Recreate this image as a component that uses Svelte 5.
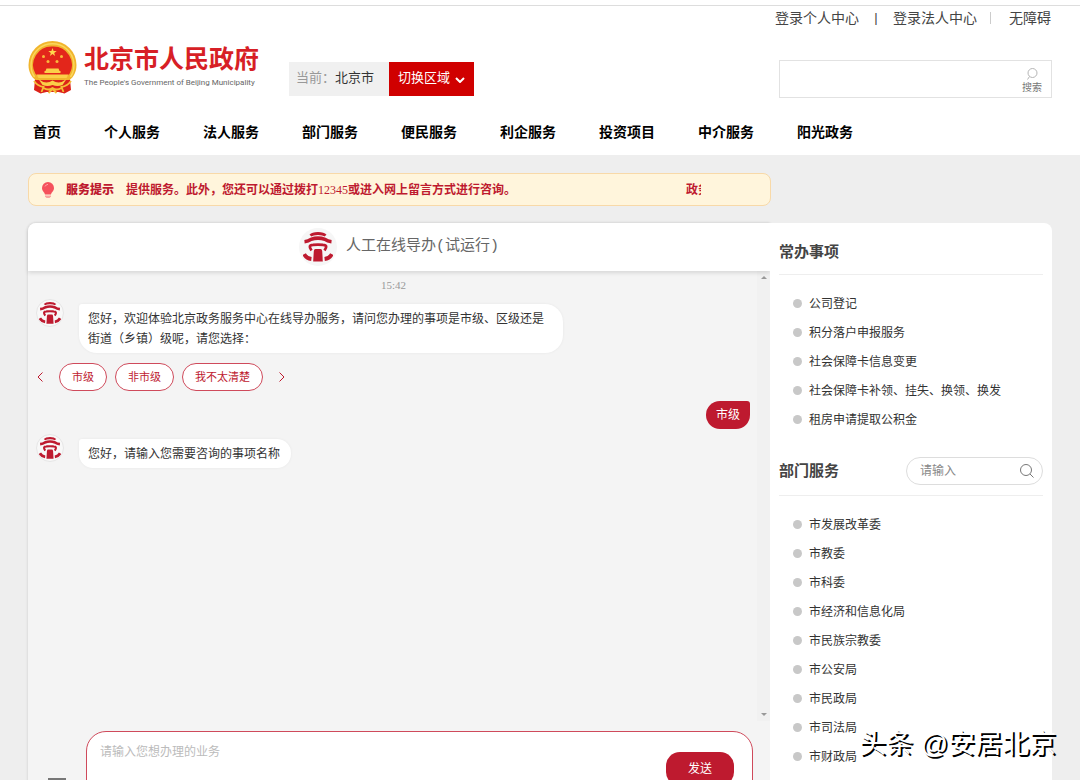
<script>
  const nav = ['首页', '个人服务', '法人服务', '部门服务', '便民服务', '利企服务', '投资项目', '中介服务', '阳光政务'];
  const common = ['公司登记', '积分落户申报服务', '社会保障卡信息变更', '社会保障卡补领、挂失、换领、换发', '租房申请提取公积金'];
  const departments = ['市发展改革委', '市教委', '市科委', '市经济和信息化局', '市民族宗教委', '市公安局', '市民政局', '市司法局', '市财政局'];
  const options = ['市级', '非市级', '我不太清楚'];
  let draft = $state('');
  let deptQuery = $state('');
  let siteQuery = $state('');
</script>

{#snippet pavilion()}
  <svg viewBox="0 0 30 30" aria-hidden="true" fill="none" stroke="#be1a2f">
    <path d="M7.500 3.600Q9.500 1.500 15 1.500T22.500 3.600" stroke-width="2.800" />
    <path d="M1.500 9.800Q5.500 9.400 8 7.400Q15 4.800 22 7.400Q24.500 9.400 28.500 9.800" stroke-width="3.600" stroke-linejoin="round" />
    <path d="M8.500 18.500Q4.500 13.200 10 12.800Q15 12.300 20 12.800Q25.500 13.200 21.500 18.500" stroke-width="2.800" stroke-linejoin="round" />
    <path d="M12.500 17H17.500Q19 17 19.200 19L19.800 29.500H10.200L10.800 19Q11 17 12.500 17Z" fill="#be1a2f" stroke="none" />
    <path d="M1.200 22.200Q3.500 26.400 8.400 27M28.800 22.200Q26.500 26.400 21.600 27" stroke-width="3.800" />
  </svg>
{/snippet}

{#snippet dots(items)}
  <ul class="list">
    {#each items as item}
      <li><a href="#item">{item}</a></li>
    {/each}
  </ul>
{/snippet}

<div class="page">
  <header class="top">
    <nav class="account" aria-label="账户">
      <a href="#person">登录个人中心</a><span class="bar">|</span><a href="#legal">登录法人中心</a><span class="rule"></span><a href="#access">无障碍</a>
    </nav>
    <div class="brand-row">
      <a class="brand" href="#home">
        <svg class="emblem" viewBox="0 0 48 53" aria-hidden="true">
          <path d="M7 33L5.500 49L12 52.500L18 51H30L36 52.500L42.500 49L41 33Z" fill="#dc2219" />
          <path d="M24 0A24 24 0 0 1 48 24C48 31 45 36 41 39H7C3 36 0 31 0 24A24 24 0 0 1 24 0Z" fill="#f1b52d" />
          <path d="M6 36A21.500 21.500 0 1 1 42 36" fill="none" stroke="#fbd75d" stroke-width="1.500" />
          <path d="M24 5.500A18.500 18.500 0 0 1 41 33L36 37H12L7 33A18.500 18.500 0 0 1 24 5.500Z" fill="#e3261b" />
          <path d="M24 7l1.100 3h3.100l-2.500 1.900.9 3-2.600-1.800-2.600 1.800.9-3L19.800 10h3.100Z" fill="#ffd84e" />
          <g fill="#f9b93c"><circle cx="15" cy="15.500" r="1.500" /><circle cx="33" cy="15.500" r="1.500" /><circle cx="19.500" cy="20.500" r="1.500" /><circle cx="28.500" cy="20.500" r="1.500" /></g>
          <path d="M18 27.500h12l1 2.500h1v2h-16v-2h1Z" fill="#fbcf48" />
          <path d="M8 33.500H40L38 37H10Z" fill="#fbcf48" />
          <path d="M10 38Q17 44 24 39.500Q31 44 38 38L34 44Q29 46 24 44Q19 46 14 44Z" fill="#fbcf48" />
          <path d="M5.500 40Q9 45 15 46L13 51M42.500 40Q39 45 33 46L35 51M15 47Q20 50 24 47Q28 50 33 47M20 52L24 48L28 52" fill="none" stroke="#f5be37" stroke-width="1.800" />
        </svg>
        <span class="names">
          <strong>北京市人民政府</strong>
          <small>The People's Government of Beijing Municipality</small>
        </span>
      </a>
      <div class="region">
        <span class="now"><i>当前：</i>北京市</span>
        <button type="button">切换区域
          <svg viewBox="0 0 10 6" aria-hidden="true"><path d="M1 1l4 4 4-4" fill="none" stroke="#fff" stroke-width="2" /></svg>
        </button>
      </div>
      <form class="search" onsubmit={(e) => e.preventDefault()}>
        <input type="search" aria-label="搜索" bind:value={siteQuery} />
        <button type="submit">
          <svg viewBox="0 0 12 12" aria-hidden="true"><circle cx="6.500" cy="5" r="4.500" fill="none" stroke="#b5b5b5" /><path d="M3.500 8.500L1.500 11.500" stroke="#b5b5b5" /></svg>
          <span>搜索</span>
        </button>
      </form>
    </div>
    <nav class="main-nav" aria-label="主导航">
      {#each nav as item}<a href="#nav">{item}</a>{/each}
    </nav>
  </header>

  <main>
    <div class="tips">
      <svg viewBox="0 0 12 16" aria-hidden="true"><path d="M6 0a6 6 0 0 1 6 6c0 3-2.500 4-3 6.500H3C2.500 10 0 9 0 6a6 6 0 0 1 6-6Z" fill="#f5515c" /><path d="M3 4.500Q4 2.500 6 2.300" stroke="#ffa4a8" fill="none" /><path d="M3 13.500h6v1L7.500 16h-3L3 14.500Z" fill="#f9a3a0" /></svg>
      <strong>服务提示</strong>
      <div class="ticker"><span>提供服务。此外，您还可以通过拨打<b>12345</b>或进入网上留言方式进行咨询。</span><span>政务</span></div>
    </div>

    <div class="columns">
      <section class="chat">
        <header class="chat-head">
          <span class="badge">{@render pavilion()}</span>
          <h1>人工在线导办(试运行)</h1>
        </header>
        <div class="body">
          <div class="log">
            <time>15:42</time>
            <div class="msg first">
              <span class="avatar">{@render pavilion()}</span>
              <p>您好，欢迎体验北京政务服务中心在线导办服务，请问您办理的事项是市级、区级还是街道（乡镇）级呢，请您选择：</p>
            </div>
            <div class="options">
              <button class="arrow" type="button" aria-label="上一组"><svg viewBox="0 0 6 10"><path d="M5.500 .5L1 5l4.500 4.500" /></svg></button>
              {#each options as o}<button class="chip" type="button">{o}</button>{/each}
              <button class="arrow" type="button" aria-label="下一组"><svg viewBox="0 0 6 10"><path d="M.5 .5L5 5 .5 9.500" /></svg></button>
            </div>
            <p class="mine">市级</p>
            <div class="msg">
              <span class="avatar">{@render pavilion()}</span>
              <p>您好，请输入您需要咨询的事项名称</p>
            </div>
          </div>
          <div class="track" aria-hidden="true"><i class="up"></i><i class="down"></i></div>
        </div>
        <form class="compose" onsubmit={(e) => e.preventDefault()}>
          <button class="keys" type="button" aria-label="菜单"><i></i><i></i><i></i></button>
          <div class="field">
            <textarea aria-label="消息" placeholder="请输入您想办理的业务" bind:value={draft}></textarea>
            <button type="submit">发送</button>
          </div>
        </form>
      </section>

      <aside>
        <div class="side-head"><h2>常办事项</h2></div>
        {@render dots(common)}
        <div class="side-head second">
          <h2>部门服务</h2>
          <label class="find">
            <input type="text" placeholder="请输入" aria-label="部门服务搜索" bind:value={deptQuery} />
            <svg viewBox="0 0 14 14" aria-hidden="true" fill="none" stroke="#777"><circle cx="6" cy="6" r="5.500" /><path d="M10 10l3.500 3.500" /></svg>
          </label>
        </div>
        {@render dots(departments)}
      </aside>
    </div>
  </main>
  <div class="mark">头条 @安居北京</div>
</div>

<style>
  :global(body) { background: #eee; }
  .page, .page * { box-sizing: border-box; }
  .page {
    position: relative;
    height: 100vh;
    overflow: hidden;
    font: 12px/20px "Liberation Sans", "Noto Sans CJK SC", sans-serif;
    color: #333;
  }
  a { color: inherit; text-decoration: none; }
  h1, h2, p, ul { margin: 0; padding: 0; }
  button, input, textarea { font: inherit; color: inherit; border: 0; padding: 0; margin: 0; background: none; outline: 0; }
  button { cursor: pointer; }
  svg { display: block; flex: none; }
  i { font-style: normal; }

  .top { background: #fff; padding: 5px 28px 0; height: 155px; }
  .top::before { content: ""; display: block; height: 1px; background: #ddd; margin: 0 -28px; }
  .account { display: flex; justify-content: flex-end; align-items: center; height: 24px; padding-right: 1px; font-size: 14px; color: #444; }
  .bar { width: 34px; text-align: center; font-size: 13px; }
  .rule { width: 1px; height: 12px; background: #ccc; margin: 0 18px 0 13px; }
  .brand-row { display: flex; align-items: center; height: 74px; }
  .brand { display: flex; align-items: center; gap: 7px; }
  .emblem { width: 49px; height: 53px; }
  .names { display: flex; flex-direction: column; white-space: nowrap; width: 177px; }
  .names strong { font-size: 25px; line-height: 32px; color: #d71f26; font-weight: 700; }
  .names small { font: 8px/16px Roboto, "Open Sans", sans-serif; color: #666; }
  .region { display: flex; margin: 24px 0 0 28px; height: 34px; line-height: 32px; font-size: 13px; }
  .now { background: #f0f0f0; padding: 0 15px 0 7px; }
  .now i { color: #999; }
  .region button { display: flex; align-items: center; gap: 5px; background: #d00000; color: #fff; padding: 0 9px 2px; }
  .region button svg { width: 10px; height: 6px; margin-top: 4px; }
  .search { display: flex; margin: 24px 0 0 auto; width: 273px; height: 38px; border: 1px solid #e2e2e2; }
  .search input { flex: 1; min-width: 0; padding: 0 8px; }
  .search button { width: 38px; display: flex; flex-direction: column; align-items: center; justify-content: center; font-size: 10px; line-height: 14px; color: #777; padding-top: 4px; gap: 1px; }
  .search button svg { width: 12px; height: 12px; }
  .main-nav { display: flex; gap: 43px; padding: 18px 5px 0; font-size: 14px; font-weight: 700; color: #000; white-space: nowrap; }

  main { padding: 18px 28px 0; }
  .tips { display: flex; align-items: center; width: 743px; height: 33px; border: 1px solid #f8d9a8; border-radius: 8px; background: #fff5dc; color: #be1a2f; padding: 0 69px 0 13px; font-weight: 700; }
  .tips svg { width: 12px; height: 16px; margin-right: 12px; }
  .tips strong { margin-right: 12px; white-space: nowrap; }
  .ticker { flex: 1; min-width: 0; overflow: hidden; display: flex; gap: 170px; white-space: nowrap; }
  .ticker span { flex: none; }
  .ticker b { font-family: "Liberation Serif", serif; font-weight: 400; }

  .columns { display: flex; align-items: stretch; margin-top: 17px; }
  .chat { flex: 1; min-width: 0; background: #f4f4f4; border-radius: 8px 0 0 0; box-shadow: 0 0 3px rgba(0, 0, 0, .15); }
  .chat-head { display: flex; align-items: center; justify-content: center; gap: 9px; height: 48px; background: #fff; border-radius: 8px 0 0 0; box-shadow: 0 2px 4px rgba(0, 0, 0, .12); position: relative; }
  .chat-head h1 { font: 15px/20px "Liberation Mono", "Noto Sans CJK SC", monospace; color: #666; }
  .badge { display: grid; place-items: center; width: 38px; height: 38px; border-radius: 50%; background: #f6f6f6; }
  .badge svg { width: 30px; height: 30px; }
  .body { display: flex; height: 450px; }
  .log { flex: 1; padding: 4px 6px 0 8px; min-width: 0; }
  time { display: block; text-align: center; font: 11px/20px "Liberation Serif", serif; color: #999; }
  .msg { display: flex; align-items: flex-start; gap: 15px; }
  .first { margin-top: 4px; }
  .avatar { display: grid; place-items: center; flex: none; width: 28px; height: 28px; border-radius: 50%; background: #f8f8f8; border: 1px solid #e6e6e6; }
  .avatar svg { width: 22px; height: 22px; }
  .msg p { margin-top: 5px; max-width: 484px; padding: 5px 11px 4px 9px; background: #fff; border-radius: 3px 14px 14px 14px; box-shadow: 0 0 3px rgba(0, 0, 0, .06); }
  .first p { padding-right: 18px; border-radius: 3px 18px 18px 18px; }
  .options { display: flex; align-items: center; gap: 8px; margin-top: 10px; }
  .arrow { width: 8px; height: 28px; display: grid; place-items: center; margin-right: 7px; }
  .arrow:last-child { margin: 0 0 0 7px; }
  .arrow svg { width: 6px; height: 10px; fill: none; stroke: #be1a2f; }
  .chip { height: 28px; padding: 0 12px; border: 1px solid #cf4a5b; border-radius: 14px; background: #fff; color: #be1a2f; font-size: 11px; }
  .mine { width: 44px; margin: 10px 1px 5px auto; line-height: 28px; text-align: center; color: #fff; background: #be1a2f; border-radius: 14px 3px 14px 14px; }
  .track { width: 13px; background: #f1f1f1; display: flex; flex-direction: column; justify-content: space-between; align-items: center; padding: 5px 0; }
  .up { border: 3px solid transparent; border-top-width: 0; border-bottom-color: #999; }
  .down { border: 3px solid transparent; border-bottom-width: 0; border-top-color: #999; }
  .compose { display: flex; padding: 10px 17px 16px 20px; }
  .keys { width: 18px; margin: 47px 20px 0 0; display: flex; flex-direction: column; gap: 4px; }
  .keys i { height: 2px; background: #777; width: 18px; }
  .field { flex: 1; display: flex; height: 90px; border: 1px solid #cf4a5b; border-radius: 20px; background: #fff; padding: 10px 18px 9px 13px; }
  .field textarea { flex: 1; min-width: 0; resize: none; }
  .field textarea::placeholder { color: #bbb; }
  .field button { width: 68px; height: 34px; margin-top: 10px; background: #be1a2f; color: #fff; border-radius: 14px; }

  aside { width: 282px; background: #fff; border-radius: 0 8px 0 0; padding: 0 9px; position: relative; }
  .side-head { display: flex; align-items: center; justify-content: space-between; height: 52px; border-bottom: 1px solid #eee; padding-top: 6px; }
  .side-head h2 { font-size: 15px; line-height: 20px; color: #444; }
  .second { height: 50px; margin-top: 12px; padding: 0; }
  .find { display: flex; align-items: center; width: 137px; height: 28px; border: 1px solid #ddd; border-radius: 14px; padding: 0 8px 0 13px; }
  .find input { flex: 1; min-width: 0; }
  .find input::placeholder { color: #888; }
  .find svg { width: 14px; height: 14px; }
  .list { list-style: none; padding: 14px 0 0 14px; }
  .list li { display: flex; align-items: center; gap: 7px; height: 29px; white-space: nowrap; }
  .list li::before { content: ""; width: 9px; height: 9px; border-radius: 50%; background: #c8c8c8; }
  .mark { position: absolute; right: 24px; bottom: 18px; font-size: 27px; line-height: 36px; color: #fff; text-shadow: 2px 2px 0 #000; white-space: nowrap; }
</style>
